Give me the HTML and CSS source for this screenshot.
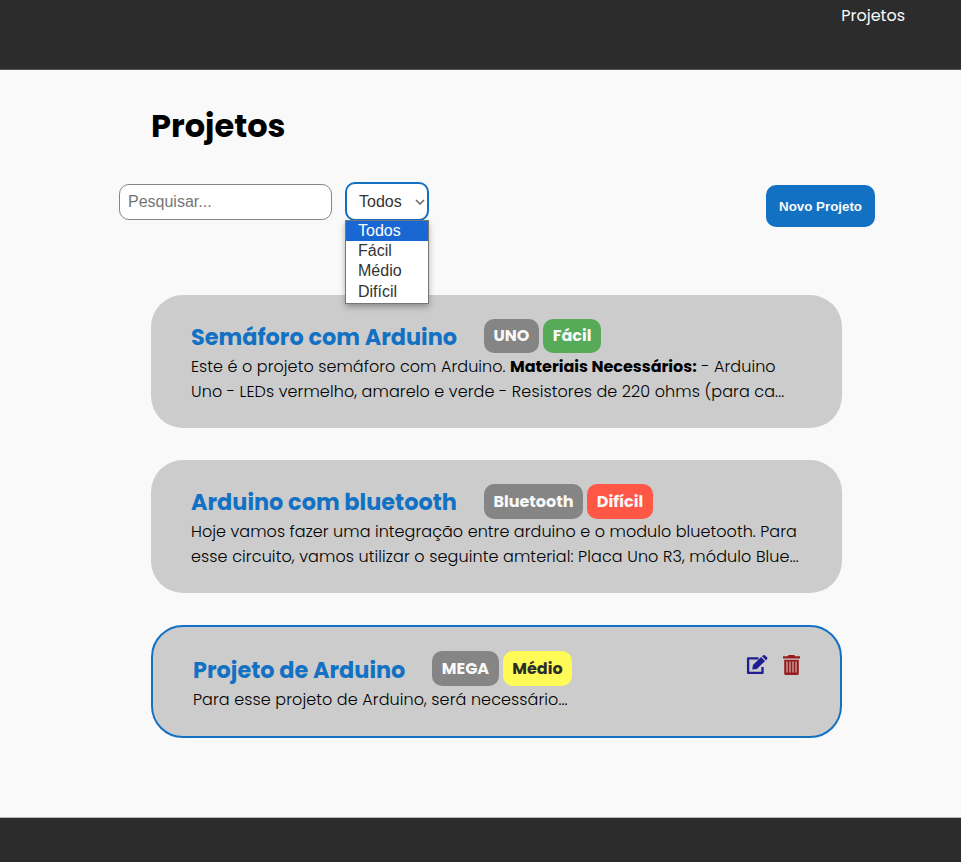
FILE: index.html
```
<!DOCTYPE html>
<html lang="pt-BR">
<head>
<meta charset="utf-8">
<title>Projetos</title>
<link rel="stylesheet" href="styles.css">
</head>
<body>
<header class="topbar"><a class="nav-link">Projetos</a></header>
<main>
  <h1>Projetos</h1>
  <div class="toolbar">
    <input class="search" type="text" placeholder="Pesquisar...">
    <div class="select">
      <span>Todos</span>
      <svg class="chevron" viewBox="0 0 10 6"><path d="M1 1l4 4 4-4"/></svg>
      <ul class="options">
        <li class="selected">Todos</li>
        <li>Fácil</li>
        <li>Médio</li>
        <li>Difícil</li>
      </ul>
    </div>
    <button class="new-project">Novo Projeto</button>
  </div>
  <section class="cards">
    <article class="card">
      <div class="card-head">
        <h2 class="t-semaforo">Semáforo com Arduino</h2>
        <span class="tag w-uno">UNO</span><span class="tag easy w-facil">Fácil</span>
      </div>
      <p><span class="l1">Este é o projeto semáforo com Arduino. <b>Materiais Necessários:</b> - Arduino</span><br><span class="l2">Uno - LEDs vermelho, amarelo e verde - Resistores de 220 ohms (para ca...</span></p>
    </article>
    <article class="card">
      <div class="card-head">
        <h2 class="t-bluetooth">Arduino com bluetooth</h2>
        <span class="tag tall w-bluetooth">Bluetooth</span><span class="tag tall hard w-dificil">Difícil</span>
      </div>
      <p><span class="l3">Hoje vamos fazer uma integração entre arduino e o modulo bluetooth. Para</span><br><span class="l4">esse circuito, vamos utilizar o seguinte amterial: Placa Uno R3, módulo Blue...</span></p>
    </article>
    <article class="card active">
      <div class="card-head">
        <h2 class="t-projeto">Projeto de Arduino</h2>
        <span class="tag tall w-mega">MEGA</span><span class="tag tall medium w-medio">Médio</span>
        <span class="actions">
          <svg class="edit" viewBox="0 0 22 20"><path class="sheet" d="M12.500 3.300H2.100v14.600h14.400v-6"/><path d="M6.300 14.600l.6-4.600 8.200-7.900 4 3.900-8.200 8zM16 1.300l.9-.8a1.600 1.600 0 0 1 2.200 0l1.800 1.800a1.500 1.500 0 0 1 0 2.100l-.9.900z"/></svg>
          <svg class="trash" viewBox="0 0 17 20"><path d="M0 1.300h4.800L5.600 0h5.800l.8 1.300H17v2.300H0zM1.200 4.700h14.600v13.800a1.500 1.500 0 0 1-1.500 1.500H2.700a1.500 1.500 0 0 1-1.500-1.500z"/><path class="slots" d="M4 6.600v10.900M7 6.600v10.900M10 6.600v10.900M13 6.600v10.900"/></svg>
        </span>
      </div>
      <p><span class="l5">Para esse projeto de Arduino, será necessário...</span></p>
    </article>
  </section>
</main>
<footer class="footer"></footer>
</body>
</html>
```
FILE: styles.css
```
* { box-sizing: border-box; }
body {
  margin: 0;
  min-height: 862px;
  display: flex;
  flex-direction: column;
  background: #f9f9f9;
  color: #000;
  font-family: Poppins, Inter, sans-serif;
  font-size: 16px;
}
.topbar {
  height: 70px;
  padding: 4px 56px 0 0;
  background: #2c2c2c;
  border-bottom: 1px solid #555;
  text-align: right;
  line-height: 24px;
}
.nav-link { color: #f9f9f9; }
main { height: 747px; }
h1 { margin: 0; padding: 32px 0 0 151px; font-size: 32px; line-height: 48px; }
.toolbar { display: flex; align-items: flex-start; margin: 32px 86px 0 119px; }
.search, .select, .new-project { font-family: "Liberation Sans", Arial, sans-serif; }
.search {
  width: 213px;
  height: 36px;
  margin-top: 2px;
  padding: 0 8px 1px;
  border: 1px solid #858585;
  border-radius: 10px;
  background: #fff;
  font-size: 16px;
}
.search::placeholder { color: #757575; }
.select {
  position: relative;
  display: flex;
  align-items: center;
  justify-content: space-between;
  width: 84px;
  height: 39px;
  margin-left: 13px;
  padding: 0 2px 0 12px;
  border: 2px solid #1371c3;
  border-radius: 10px;
  background: #fff;
  color: #333;
}
.chevron { width: 10px; height: 6px; fill: none; stroke: #666; stroke-width: 1.5; }
.options {
  position: absolute;
  top: 36px;
  left: -2px;
  width: 84px;
  height: 84px;
  margin: 0;
  padding: 0;
  border: 1px solid #767676;
  background: #fff;
  box-shadow: 0 3px 6px rgba(0, 0, 0, .3);
  list-style: none;
  line-height: 20.2px;
}
.options li { padding-left: 12px; }
.options .selected { background: #1967d2; color: #fff; }
.new-project {
  width: 109px;
  height: 42px;
  margin: 3px 0 0 auto;
  padding: 0;
  border: 0;
  border-radius: 10px;
  background: #1371c3;
  color: #f9f9f9;
  font-size: 13.333px;
  font-weight: 700;
}
.cards { display: flex; flex-direction: column; gap: 32px; margin: 68px 119px 0 151px; }
.card { height: 133px; padding: 24px 40px; border-radius: 32px; background: #ccc; }
.card.active { height: 113px; border: 2px solid #1371c3; }
.card-head { display: flex; height: 35px; }
.active .card-head { height: 36px; }
h2 { margin: 0; font-size: 22.4px; line-height: 36px; color: #1371c3; white-space: nowrap; }
.t-semaforo, .t-bluetooth { width: 293px; }
.t-projeto { width: 239px; }
.tag {
  height: 34px;
  margin-right: 4px;
  border-radius: 10px;
  background: #858585;
  color: #f9f9f9;
  font-weight: 700;
  line-height: 33px;
  text-align: center;
  white-space: nowrap;
}
.tag.tall { height: 35px; line-height: 35px; }
.tag.easy { background: #56aa58; }
.tag.hard { background: #ff5745; }
.tag.medium { background: #fffb56; color: #2c2c2c; }
.w-uno { width: 55px; }
.w-facil { width: 58px; }
.w-bluetooth { width: 99px; }
.w-dificil { width: 66px; }
.w-mega { width: 67px; }
.w-medio { width: 69px; }
.active h2 { line-height: 38px; }
.actions { display: flex; gap: 15px; margin: 4px 0 0 auto; }
.edit { width: 22px; height: 20px; fill: #1f1d91; }
.sheet { fill: none; stroke: #1f1d91; stroke-width: 2.3; stroke-linejoin: round; }
.trash { width: 17px; height: 20px; fill: #971c1c; }
.slots { stroke: #ccb4b4; stroke-width: 1.2; }
p { margin: 0; font-weight: 300; line-height: 25px; white-space: nowrap; }
p b { font-weight: 700; letter-spacing: 0; }
.l1 { letter-spacing: .06px; }
.l2 { letter-spacing: .09px; }
.l3 { letter-spacing: .055px; }
.l4 { letter-spacing: .105px; }
.l5 { letter-spacing: .085px; }
.footer { height: 45px; background: #2c2c2c; border-top: 1px solid #b5b5b5; border-bottom: 1px solid #2b232b; }
```
